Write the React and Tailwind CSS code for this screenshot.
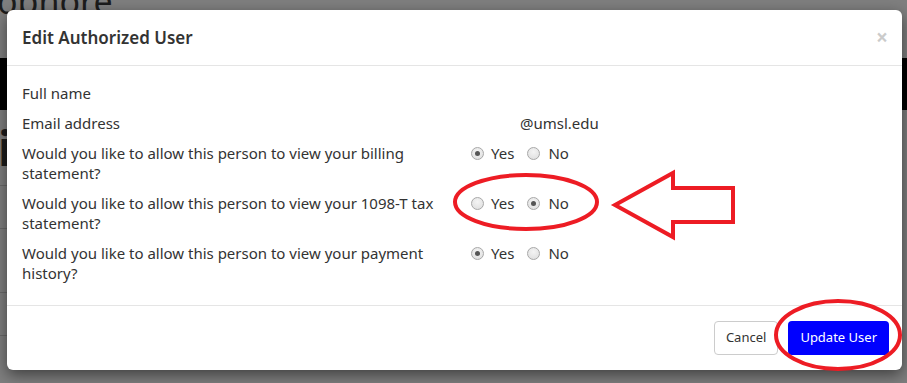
import React from "react";

function Radio({ checked }) {
  return (
    <span className="inline-flex h-[13px] w-[13px] shrink-0 items-center justify-center rounded-full border border-[#a8a8a8] bg-[radial-gradient(circle_at_50%_35%,#f4f4f4,#dcdcdc)]">
      {checked && <span className="h-[5px] w-[5px] rounded-full bg-[#555]" />}
    </span>
  );
}

function YesNo({ yes }) {
  return (
    <div className="flex items-center">
      <Radio checked={yes} />
      <span className="ml-[7px]">Yes</span>
      <span className="ml-[13px] flex"><Radio checked={!yes} /></span>
      <span className="ml-[8px]">No</span>
    </div>
  );
}

function Row({ label, children }) {
  return (
    <div className="flex gap-[16px]">
      <div className="w-[433px] shrink-0">{label}</div>
      <div className="flex-1">{children}</div>
    </div>
  );
}

export default function App() {
  const font = { fontFamily: '"Noto Sans", "Open Sans", sans-serif' };
  return (
    <div
      className="relative h-[383px] w-[907px] overflow-hidden bg-[#7f7f7f] text-[#333]"
      style={font}
    >
      {/* underlying page behind the backdrop */}
      <div className="absolute left-[-3px] top-[-16px] text-[34px] leading-none text-[#1c1c1c]">ophore</div>
      <div className="absolute left-0 top-[58px] h-[52px] w-[8px] bg-black" />
      <div className="absolute right-0 top-[58px] h-[52px] w-[6px] bg-black" />
      <div className="absolute left-[-2px] top-[124px] text-[48px] font-bold leading-none text-[#1c1c1c]">i</div>
      <div className="absolute left-0 top-[185px] h-px w-[8px] bg-[#6a6a6a]" />
      <div className="absolute left-0 top-[228px] h-px w-[8px] bg-[#6a6a6a]" />
      <div className="absolute left-0 top-[292px] h-px w-[8px] bg-[#6a6a6a]" />
      <div className="absolute left-0 top-[335px] h-px w-[8px] bg-[#6a6a6a]" />

      {/* modal */}
      <div className="relative ml-[7px] mt-[10px] w-[895px] rounded-[6px] bg-white shadow-[0_5px_15px_rgba(0,0,0,0.5)]">
        <div className="flex h-[56px] items-center justify-between border-b border-[#e5e5e5] px-[15px]">
          <h4 className="text-[17px] font-semibold text-[#333]">Edit Authorized User</h4>
          <span className="mr-[-1px] text-[21px] font-bold leading-none text-black opacity-20">×</span>
        </div>
        <div className="flex flex-col gap-[10px] px-[15px] pb-[22px] pt-[17px] text-[15px] leading-[20px]">
          <Row label="Full name" />
          <Row label="Email address">
            <span className="pl-[49px]">@umsl.edu</span>
          </Row>
          <Row label="Would you like to allow this person to view your billing statement?">
            <YesNo yes />
          </Row>
          <Row label="Would you like to allow this person to view your 1098-T tax statement?">
            <YesNo yes={false} />
          </Row>
          <Row label="Would you like to allow this person to view your payment history?">
            <YesNo yes />
          </Row>
        </div>
        <div className="flex justify-end gap-[10px] border-t border-[#e5e5e5] px-[13px] py-[15px] text-[13px]">
          <button className="h-[34px] rounded-[4px] border border-[#ccc] bg-white px-[11px] text-[#333]">Cancel</button>
          <button className="h-[34px] rounded-[4px] bg-[#0000ff] px-[12px] text-white">Update User</button>
        </div>
      </div>

      {/* red annotations */}
      <svg className="pointer-events-none absolute left-0 top-0" width="907" height="383">
        <ellipse cx="526" cy="202" rx="71" ry="27" fill="none" stroke="#ed1c24" strokeWidth="4" />
        <polygon
          points="615,205 673,173 673,188 733,188 733,222 673,222 673,237"
          fill="none"
          stroke="#ed1c24"
          strokeWidth="4"
          strokeLinejoin="miter"
        />
        <ellipse cx="838" cy="335" rx="62" ry="34" fill="none" stroke="#ed1c24" strokeWidth="4" />
      </svg>
    </div>
  );
}
